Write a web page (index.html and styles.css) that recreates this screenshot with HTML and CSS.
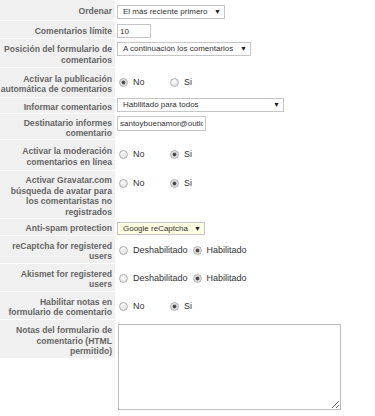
FILE: index.html
```html
<!DOCTYPE html>
<html lang="es">
<head>
<meta charset="utf-8">
<title>Comentarios</title>
<link rel="stylesheet" href="styles.css">
</head>
<body>
<div class="form">
  <div class="key">Ordenar</div>
  <div class="val v-r1"><span class="sel"><select><option>El más reciente primero</option></select></span></div>

  <div class="key">Comentarios límite</div>
  <div class="val"><input class="txt txt-short" type="text" value="10"></div>

  <div class="key">Posición del formulario de comentarios</div>
  <div class="val"><span class="sel"><select><option>A continuación los comentarios</option></select></span></div>

  <div class="key">Activar la publicación automática de comentarios</div>
  <div class="val"><div class="radios"><input type="radio" name="r4" checked><span class="opt">No</span><input type="radio" name="r4"><span class="opt">Si</span></div></div>

  <div class="key">Informar comentarios</div>
  <div class="val v-r5"><span class="sel"><select class="sel-wide"><option>Habilitado para todos</option></select></span></div>

  <div class="key">Destinatario informes comentario</div>
  <div class="val v-r6"><input class="txt txt-mail" type="text" value="santoybuenamor@outlook.com"></div>

  <div class="key">Activar la moderación comentarios en línea</div>
  <div class="val"><div class="radios"><input type="radio" name="r7"><span class="opt">No</span><input type="radio" name="r7" checked><span class="opt">Si</span></div></div>

  <div class="key">Activar Gravatar.com búsqueda de avatar para los comentaristas no registrados</div>
  <div class="val"><div class="radios radios-hi"><input type="radio" name="r8"><span class="opt">No</span><input type="radio" name="r8" checked><span class="opt">Si</span></div></div>

  <div class="key">Anti-spam protection</div>
  <div class="val"><span class="sel"><select class="sel-yellow"><option>Google reCaptcha</option></select></span></div>

  <div class="key">reCaptcha for registered users</div>
  <div class="val"><div class="radios"><input type="radio" name="r10"><span class="opt">Deshabilitado</span><input type="radio" name="r10" checked><span class="opt">Habilitado</span></div></div>

  <div class="key">Akismet for registered users</div>
  <div class="val"><div class="radios"><input type="radio" name="r11"><span class="opt">Deshabilitado</span><input type="radio" name="r11" checked><span class="opt">Habilitado</span></div></div>

  <div class="key">Habilitar notas en formulario de comentario</div>
  <div class="val"><div class="radios"><input type="radio" name="r12"><span class="opt">No</span><input type="radio" name="r12" checked><span class="opt">Si</span></div></div>

  <div class="key key-top">Notas del formulario de comentario (HTML permitido)</div>
  <div class="val"><textarea class="notes"></textarea></div>
</div>
</body>
</html>
```
FILE: styles.css
```css
html, body {
  margin: 0;
  padding: 0;
  background: #fff;
}

body {
  font-family: "Liberation Sans", Arial, sans-serif;
  color: #333;
}

.form {
  display: grid;
  grid-template-columns: 115px 1fr;
  grid-template-rows: 20px 17px 28px 29px 15px 25px 30px 47px 16px 27px 27px 27px auto;
  row-gap: 1px;
}

.key {
  background: #f0f0f0;
  color: #666;
  font-weight: bold;
  font-size: 8.6px;
  line-height: 10.5px;
  text-align: right;
  padding: 3px 3px 0 0;
  display: flex;
  align-items: center;
  justify-content: flex-end;
}

.key-top {
  align-self: start;
  align-items: flex-start;
  padding: 5px 3px 2px 0;
  height: 31px;
}

.val {
  padding: 3px 0 0 2px;
  min-width: 0;
}

.v-r1 { padding-top: 5px; }
.v-r5 { padding-top: 0; }
.v-r6 { padding-top: 2px; }

.sel {
  position: relative;
  display: inline-block;
  vertical-align: top;
}

.sel select {
  appearance: none;
  -webkit-appearance: none;
  font-family: "Liberation Sans", Arial, sans-serif;
  font-size: 8px;
  color: #333;
  height: 14px;
  line-height: 12px;
  padding: 0 16px 0 5px;
  margin: 0;
  border: 1px solid #c6c6c6;
  border-radius: 0;
  background: #fff;
  display: block;
}

.sel::after {
  content: "▼";
  position: absolute;
  right: 4px;
  top: 3px;
  font-size: 7px;
  line-height: 8px;
  color: #222;
  pointer-events: none;
}

.sel select.sel-wide {
  width: 167px;
}

.sel select.sel-yellow {
  background: #fdfde2;
  height: 13px;
}

.txt {
  font-family: "Liberation Sans", Arial, sans-serif;
  font-size: 8px;
  color: #333;
  border: 1px solid #c6c6c6;
  border-radius: 0;
  margin: 0;
  padding: 0 2px;
  box-sizing: border-box;
  display: block;
  outline: none;
}

.txt-short {
  width: 34px;
  height: 14px;
}

.txt-mail {
  width: 89px;
  height: 15px;
}

.radios {
  display: flex;
  align-items: center;
  margin-top: 6px;
  font-size: 9px;
  color: #333;
  line-height: 11px;
}

.radios-hi {
  margin-top: 4px;
}

.radios input[type="radio"] {
  appearance: none;
  -webkit-appearance: none;
  width: 9px;
  height: 9px;
  margin: 0 0 0 5px;
  border: 1px solid #b4b4b4;
  border-radius: 50%;
  background: radial-gradient(circle at 45% 40%, #ffffff 0, #e6e6e6 60%, #cfcfcf 100%);
  box-sizing: border-box;
  flex: none;
}

.radios input[type="radio"]:first-child {
  margin-left: 2px;
}

.radios input[type="radio"]:checked {
  background: radial-gradient(circle, #3a3a3a 0, #555 1.4px, #e4e4e4 2.4px, #d2d2d2 100%);
}

.opt {
  margin-left: 5px;
  min-width: 32px;
}

.notes {
  display: block;
  width: 223px;
  height: 86px;
  margin: 1px 0 0 1px;
  border: 1px solid #bdbdbd;
  border-radius: 0;
  padding: 2px;
  box-sizing: border-box;
  font-family: "Liberation Sans", Arial, sans-serif;
  font-size: 9px;
}
```
